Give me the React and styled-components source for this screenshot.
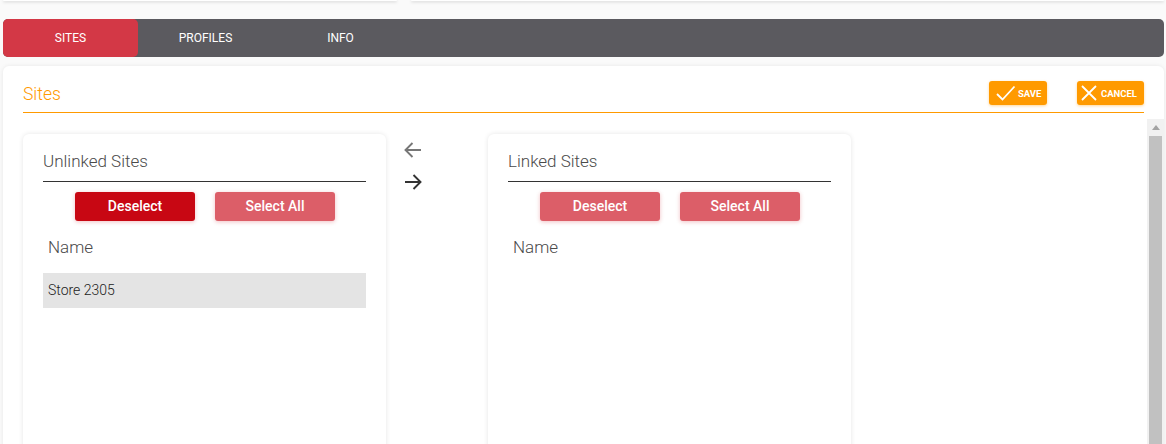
import React from 'react';
import styled, { createGlobalStyle } from 'styled-components';

const GlobalStyle = createGlobalStyle`
  html, body {
    margin: 0;
    height: 100%;
    overflow: hidden;
    background: #fafafa;
    font-family: Roboto, "Liberation Sans", sans-serif;
  }
`;

function PickList({ title, selected }) {
  return (
    <ListCard>
      <ListTitle>{title}</ListTitle>
      <ListButtons>
        <PickButton $active={selected}>Deselect</PickButton>
        <PickButton>Select All</PickButton>
      </ListButtons>
      <NameHeader>Name</NameHeader>
      {selected && <ListRow>{selected}</ListRow>}
    </ListCard>
  );
}

export default function App() {
  return (
    <Page>
      <GlobalStyle />
      <TopCards>
        <TopCard $width="394px" />
        <TopCard $grow />
      </TopCards>

      <TabBar>
        <Tab $active>SITES</Tab>
        <Tab>PROFILES</Tab>
        <Tab>INFO</Tab>
      </TabBar>

      <Panel>
        <PanelHeader>
          <PanelTitle>Sites</PanelTitle>
          <SaveButton>
            <svg width="20" height="16" viewBox="0 0 20 16" fill="none" stroke="#fff" strokeWidth="1.8">
              <path d="M1 9l5.500 5.500L18.500 1.500" />
            </svg>
            SAVE
          </SaveButton>
          <CancelButton>
            <svg width="16" height="16" viewBox="0 0 16 16" fill="none" stroke="#fff" strokeWidth="1.8">
              <path d="M1 1l14 14M15 1L1 15" />
            </svg>
            CANCEL
          </CancelButton>
        </PanelHeader>

        <PanelBody>
          <Lists>
            <PickList title="Unlinked Sites" selected="Store 2305" />
            <Arrows>
              <ArrowIcon $muted viewBox="0 0 18 16">
                <path d="M17 8H1.500M8.500 1L1.500 8l7 7" />
              </ArrowIcon>
              <ArrowIcon viewBox="0 0 18 16">
                <path d="M1 8h15.500M9.500 1l7 7-7 7" />
              </ArrowIcon>
            </Arrows>
            <PickList title="Linked Sites" />
          </Lists>
          <Scrollbar>
            <ScrollArrow />
            <ScrollThumb />
          </Scrollbar>
        </PanelBody>
      </Panel>
    </Page>
  );
}

const Page = styled.div`
  height: 444px;
  overflow: hidden;
  padding: 0 2px 0 3px;
  box-sizing: border-box;
`;

const TopCards = styled.div`
  display: flex;
  gap: 14px;
  height: 19px;
  align-items: flex-start;
`;

const TopCard = styled.div`
  width: ${({ $width }) => $width || 'auto'};
  flex: ${({ $grow }) => ($grow ? 1 : 'none')};
  height: 1px;
  background: #fff;
  border-radius: 0 0 6px 6px;
  box-shadow: 0 1px 3px rgba(0, 0, 0, 0.25);
`;

const TabBar = styled.div`
  display: flex;
  height: 38px;
  background: #5b5a5f;
  border-radius: 5px;
`;

const Tab = styled.div`
  width: 135px;
  display: flex;
  align-items: center;
  justify-content: center;
  font-size: 12px;
  font-weight: 400;
  color: #fff;
  background: ${({ $active }) => ($active ? '#d33846' : 'transparent')};
  border-radius: ${({ $active }) => ($active ? '5px' : '0')};
`;

const Panel = styled.div`
  margin-top: 9px;
  height: 400px;
  background: #fff;
  border-radius: 6px 6px 0 0;
  box-shadow: 0 0 4px rgba(0, 0, 0, 0.08);
`;

const PanelHeader = styled.div`
  display: flex;
  align-items: flex-end;
  height: 46px;
  margin: 0 20px;
  border-bottom: 1px solid #ff9a00;
`;

const PanelTitle = styled.h2`
  flex: 1;
  margin: 0 0 7px;
  font-size: 17.5px;
  line-height: 22px;
  font-weight: 300;
  color: #ff9a00;
`;

const ActionButton = styled.button`
  display: flex;
  align-items: center;
  height: 24px;
  margin-bottom: 7px;
  padding: 0;
  border: 0;
  border-radius: 3px;
  background: #ff9a00;
  box-shadow: 0 1px 3px rgba(255, 154, 0, 0.4);
  color: #fff;
  font-family: inherit;
  font-size: 9.5px;
  font-weight: 700;
`;

const SaveButton = styled(ActionButton)`
  width: 58px;
  gap: 2px;
  padding-left: 7px;
  margin-right: 30px;
`;

const CancelButton = styled(ActionButton)`
  width: 67px;
  gap: 4px;
  padding-left: 4px;
`;

const PanelBody = styled.div`
  display: flex;
  justify-content: space-between;
  padding: 6px 0 0 20px;
`;

const Lists = styled.div`
  display: flex;
  padding-top: 15px;
`;

const ListCard = styled.div`
  width: 363px;
  height: 330px;
  padding: 0 20px;
  box-sizing: border-box;
  background: #fff;
  border-radius: 6px;
  box-shadow: 0 0 5px rgba(0, 0, 0, 0.1);
`;

const ListTitle = styled.div`
  height: 47px;
  line-height: 55px;
  border-bottom: 1px solid #333;
  font-size: 17px;
  font-weight: 300;
  color: #4a4a4a;
`;

const ListButtons = styled.div`
  display: flex;
  justify-content: center;
  gap: 20px;
  margin-top: 10px;
`;

const PickButton = styled.button`
  width: 120px;
  height: 29px;
  padding: 0 0 1px 1px;
  border: 0;
  border-radius: 3px;
  background: ${({ $active }) => ($active ? '#c80713' : '#dc5e68')};
  box-shadow: 0 1px 4px rgba(200, 7, 19, 0.25);
  color: #fff;
  font-family: inherit;
  font-size: 14px;
  font-weight: 500;
`;

const NameHeader = styled.div`
  height: 52px;
  line-height: 53px;
  padding-left: 5px;
  font-size: 17px;
  font-weight: 300;
  color: #4a4a4a;
`;

const ListRow = styled.div`
  height: 35px;
  line-height: 35px;
  padding-left: 5px;
  background: #e4e4e4;
  font-size: 14px;
  font-weight: 300;
  color: #222;
`;

const Arrows = styled.div`
  width: 84px;
  padding-left: 18px;
  display: flex;
  flex-direction: column;
  align-items: flex-start;
  gap: 16px;
  padding-top: 8px;
`;

const ArrowIcon = styled.svg`
  width: 18px;
  height: 16px;
  fill: none;
  stroke: ${({ $muted }) => ($muted ? '#777' : '#333')};
  stroke-width: 1.9;
`;

const Scrollbar = styled.div`
  width: 17px;
  height: 330px;
  background: #f1f1f1;
`;

const ScrollArrow = styled.div`
  width: 0;
  height: 0;
  margin: 0 auto;
  position: relative;
  top: 6px;
  border-left: 4px solid transparent;
  border-right: 4px solid transparent;
  border-bottom: 5px solid #a3a3a3;
`;

const ScrollThumb = styled.div`
  height: 313px;
  margin: 12px 2px 0;
  background: #c1c1c1;
`;
